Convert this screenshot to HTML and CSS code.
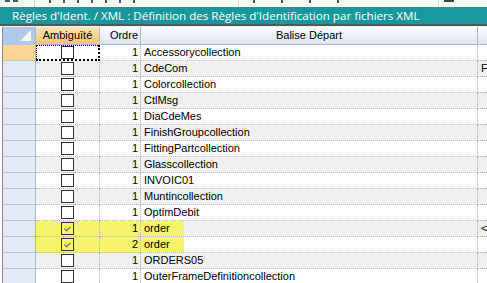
FILE: index.html
```html
<!DOCTYPE html>
<html lang="fr">
<head>
<meta charset="utf-8">
<link rel="stylesheet" href="styles.css">
</head>
<body>
<div class="toolbar">
  <div class="tb-seg tb-a"><span class="mk m1"></span><span class="mk m1"></span></div>
  <div class="tb-seg tb-b"><span class="mk m2"></span><span class="mk m2"></span><span class="mk m2"></span><span class="mk m2"></span><span class="mk m2"></span><span class="mk m2"></span><span class="mk m2"></span></div>
  <div class="tb-seg tb-c"><span class="mk m2"></span><span class="mk m2"></span><span class="mk m2"></span><span class="mk m2"></span></div>
  <div class="tb-seg tb-d"><span class="tb-block"></span></div>
</div>
<div class="titlebar">Règles d'Ident. / XML : Définition des Règles d'Identification par fichiers XML</div>
<div class="titlesep"></div>
<div class="grid">
  <div class="row head">
    <div class="c ind corner"><span class="tri"></span></div>
    <div class="c amb sel">Ambiguïté</div>
    <div class="c ord">Ordre</div>
    <div class="c bal">Balise Départ</div>
    <div class="c ext"></div>
  </div>
  <div class="row odd">
    <div class="c ind cur"></div>
    <div class="c amb focus"><span class="cb"></span></div>
    <div class="c ord">1</div>
    <div class="c bal">Accessorycollection</div>
    <div class="c ext"></div>
  </div>
  <div class="row even">
    <div class="c ind"></div>
    <div class="c amb"><span class="cb"></span></div>
    <div class="c ord">1</div>
    <div class="c bal">CdeCom</div>
    <div class="c ext">F</div>
  </div>
  <div class="row odd">
    <div class="c ind"></div>
    <div class="c amb"><span class="cb"></span></div>
    <div class="c ord">1</div>
    <div class="c bal">Colorcollection</div>
    <div class="c ext"></div>
  </div>
  <div class="row even">
    <div class="c ind"></div>
    <div class="c amb"><span class="cb"></span></div>
    <div class="c ord">1</div>
    <div class="c bal">CtlMsg</div>
    <div class="c ext"></div>
  </div>
  <div class="row odd">
    <div class="c ind"></div>
    <div class="c amb"><span class="cb"></span></div>
    <div class="c ord">1</div>
    <div class="c bal">DiaCdeMes</div>
    <div class="c ext"></div>
  </div>
  <div class="row even">
    <div class="c ind"></div>
    <div class="c amb"><span class="cb"></span></div>
    <div class="c ord">1</div>
    <div class="c bal">FinishGroupcollection</div>
    <div class="c ext"></div>
  </div>
  <div class="row odd">
    <div class="c ind"></div>
    <div class="c amb"><span class="cb"></span></div>
    <div class="c ord">1</div>
    <div class="c bal">FittingPartcollection</div>
    <div class="c ext"></div>
  </div>
  <div class="row even">
    <div class="c ind"></div>
    <div class="c amb"><span class="cb"></span></div>
    <div class="c ord">1</div>
    <div class="c bal">Glasscollection</div>
    <div class="c ext"></div>
  </div>
  <div class="row odd">
    <div class="c ind"></div>
    <div class="c amb"><span class="cb"></span></div>
    <div class="c ord">1</div>
    <div class="c bal">INVOIC01</div>
    <div class="c ext"></div>
  </div>
  <div class="row even">
    <div class="c ind"></div>
    <div class="c amb"><span class="cb"></span></div>
    <div class="c ord">1</div>
    <div class="c bal">Muntincollection</div>
    <div class="c ext"></div>
  </div>
  <div class="row odd">
    <div class="c ind"></div>
    <div class="c amb"><span class="cb"></span></div>
    <div class="c ord">1</div>
    <div class="c bal">OptimDebit</div>
    <div class="c ext"></div>
  </div>
  <div class="row even">
    <div class="c ind"></div>
    <div class="c amb hl"><span class="cb"><svg viewBox="0 0 13 13" class="chk"><path d="M3 6.5 L5.5 9 L10 4.5"/></svg></span></div>
    <div class="c ord hl">1</div>
    <div class="c bal"><span class="hlbox">order</span></div>
    <div class="c ext">&lt;</div>
  </div>
  <div class="row odd">
    <div class="c ind"></div>
    <div class="c amb hl"><span class="cb"><svg viewBox="0 0 13 13" class="chk"><path d="M3 6.5 L5.5 9 L10 4.5"/></svg></span></div>
    <div class="c ord hl">2</div>
    <div class="c bal"><span class="hlbox">order</span></div>
    <div class="c ext"></div>
  </div>
  <div class="row even">
    <div class="c ind"></div>
    <div class="c amb"><span class="cb"></span></div>
    <div class="c ord">1</div>
    <div class="c bal">ORDERS05</div>
    <div class="c ext"></div>
  </div>
  <div class="row odd">
    <div class="c ind"></div>
    <div class="c amb"><span class="cb"></span></div>
    <div class="c ord">1</div>
    <div class="c bal">OuterFrameDefinitioncollection</div>
    <div class="c ext"></div>
  </div>
</div>
</body>
</html>
```
FILE: styles.css
```css
html, body {
  margin: 0;
  padding: 0;
  background: #ffffff;
}
body {
  width: 487px;
  height: 283px;
  overflow: hidden;
  font-family: "Liberation Sans", Arial, sans-serif;
  font-size: 11px;
  color: #000;
}
.toolbar {
  height: 7px;
  display: flex;
  overflow: hidden;
  background: #fff;
}
.tb-seg {
  height: 7px;
  display: flex;
  align-items: flex-start;
  gap: 12px;
  overflow: hidden;
  border-right: 1px solid #d8d8d8;
}
.tb-a { width: 35px; padding-left: 5px; gap: 3px; box-sizing: border-box; }
.tb-b { width: 204px; padding-left: 14px; box-sizing: border-box; }
.tb-c { width: 200px; padding-left: 14px; gap: 26px; box-sizing: border-box; }
.tb-d { flex: 1; border-right: none; }
.mk {
  display: block;
  background: #555;
}
.m1 { width: 5px; height: 2px; }
.m2 { width: 2px; height: 3px; margin-top: 0; }
.tb-block {
  display: block;
  margin-left: 5px;
  width: 10px;
  height: 2px;
  background: #444;
}
.titlebar {
  height: 17px;
  line-height: 17px;
  background: #18979c;
  color: #ffffff;
  padding-left: 12px;
  font-family: "Open Sans", "Noto Sans", sans-serif;
  font-size: 11.6px;
  white-space: nowrap;
  overflow: hidden;
}
.titlesep {
  height: 2px;
  background: #4d5a5c;
  border-bottom: 1px solid #f0f0f0;
}
.grid {
  margin-left: 2px;
  border-left: 1px solid #8a8a8a;
}
.row {
  display: grid;
  grid-template-columns: 33px 64px 41px 337px 1fr;
  height: 16px;
}
.row.head { height: 18px; }
.c {
  box-sizing: border-box;
  line-height: 15px;
  white-space: nowrap;
  overflow: hidden;
  border-right: 1px dotted #b4b4b4;
  border-bottom: 1px dotted #b4b4b4;
}
.even .c { background: #f0f0f0; }
.odd .c { background: #ffffff; }
.row .c.ind {
  background: #e3eaf6;
  border-right: 1px solid #a9b9d1;
  border-bottom: 1px solid #b9c7dc;
}
.row .c.ind.cur { background: #fdd490; }
.head .c {
  line-height: 17px;
  text-align: center;
  background: linear-gradient(#fbfcfe, #dfe5f0);
  border-right: 1px solid #a9b9d1;
  border-bottom: 1px solid #a9b9d1;
}
.head .c.sel { background: linear-gradient(#fde5b5, #f6c472); }
.head .c.corner {
  background: #b1c8ea;
  position: relative;
}
.tri {
  position: absolute;
  right: 4px;
  bottom: 3px;
  width: 0;
  height: 0;
  border-left: 11px solid transparent;
  border-bottom: 11px solid #f4f7fc;
}
.c.amb {
  display: flex;
  justify-content: center;
  align-items: flex-start;
  padding-top: 1px;
}
.head .c.amb { display: block; padding-top: 0; }
.c.ord { text-align: right; padding-right: 2px; }
.c.bal { padding-left: 3px; }
.head .c.bal { padding-left: 0; }
.c.ext { border-right: none; padding-left: 3px; }
.row .c.focus {
  background: #fff;
  border: 2px dotted #000;
  border-left: 1px dotted #000;
  border-top: 1px dotted #000;
  padding-top: 0;
}
.cb {
  display: block;
  width: 13px;
  height: 13px;
  box-sizing: border-box;
  border: 1px solid #333;
  background: #fff;
}
.hl .cb { background: transparent; }
.row .c.hl { background: #f5f56b; }
.c.bal .hlbox {
  display: block;
  width: 43px;
  margin-left: -3px;
  padding-left: 3px;
  box-sizing: border-box;
  background: #f5f56b;
  height: 15px;
}
.chk {
  display: block;
  width: 11px;
  height: 11px;
}
.chk path {
  fill: none;
  stroke: #666;
  stroke-width: 1.4;
}
```
